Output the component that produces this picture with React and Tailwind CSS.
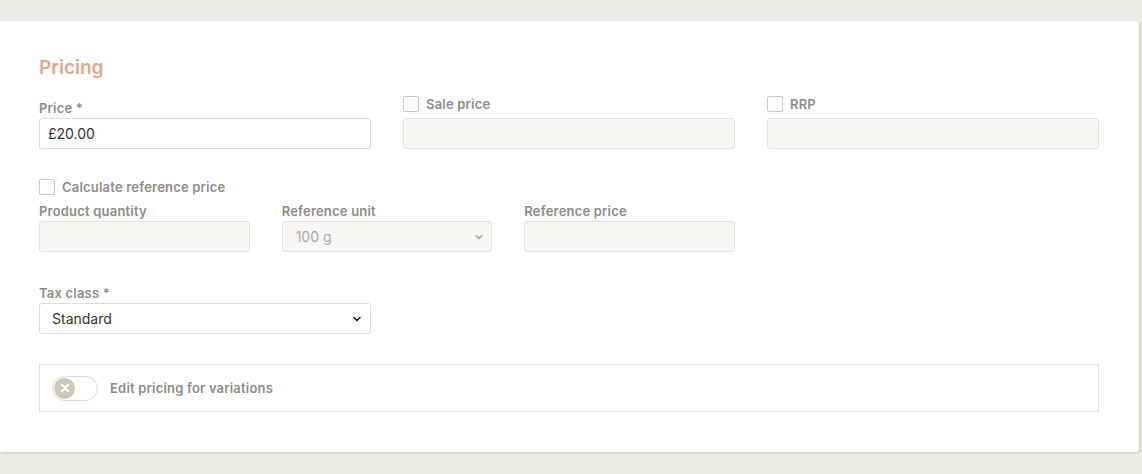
import React from "react";

const font = { fontFamily: '"Inter", "Liberation Sans", sans-serif' };

function Label({ children }) {
  return <div className="text-[13px] font-semibold text-[#8d8d8a] leading-[16px] tracking-[0.2px]">{children}</div>;
}

function Check() {
  return <span className="inline-block w-[16px] h-[16px] border border-[#c9c7c0] rounded-[2px] bg-white shrink-0" />;
}

function Disabled({ children, select }) {
  return (
    <div className="h-[31px] rounded-[3px] border border-[#e3e1db] bg-[#f7f6f2] flex items-center justify-between pl-[13px] pr-[6px] text-[14px] text-[#a9a8a4]">
      <span>{children}</span>
      {select && (
        <svg width="12" height="12" viewBox="0 0 12 12" className="text-[#a5a4a0]">
          <path d="M3 4.5l3 3 3-3" fill="none" stroke="currentColor" strokeWidth="1.5" strokeLinecap="round" strokeLinejoin="round" />
        </svg>
      )}
    </div>
  );
}

export default function App() {
  return (
    <div className="w-[1142px] h-[474px] bg-[#ecebe6] pt-[21px] overflow-hidden" style={font}>
      <div className="w-[1139px] h-[431px] bg-white rounded-tr-[4px] rounded-br-[4px] shadow-[1px_1px_3px_rgba(0,0,0,0.18)] pl-[39px] pr-[40px] pt-[36px]">
        <h2 className="text-[19px] font-semibold text-[#e2a78c] leading-[22px]">Pricing</h2>

        <div className="grid grid-cols-3 gap-x-[32px] mt-[17px] w-[1060px]">
          <div>
            <div className="h-[22px] flex items-end pb-[2px]"><Label>Price *</Label></div>
            <div className="h-[31px] rounded-[3px] border border-[#dedcd6] bg-white flex items-center pl-[8px] text-[14px] text-[#333]">£20.00</div>
          </div>
          <div>
            <div className="h-[22px] flex items-start gap-[7px]"><Check /><Label>Sale price</Label></div>
            <Disabled />
          </div>
          <div>
            <div className="h-[22px] flex items-start gap-[7px]"><Check /><Label>RRP</Label></div>
            <Disabled />
          </div>
        </div>

        <div className="mt-[30px] flex items-center gap-[7px] h-[16px]"><Check /><Label>Calculate reference price</Label></div>

        <div className="grid grid-cols-3 gap-x-[32px] mt-[8px] w-[696px]">
          <div>
            <div className="h-[17px]"><Label>Product quantity</Label></div>
            <div className="mt-[1px]"><Disabled /></div>
          </div>
          <div>
            <div className="h-[17px]"><Label>Reference unit</Label></div>
            <div className="mt-[1px]"><Disabled select>100 g</Disabled></div>
          </div>
          <div>
            <div className="h-[17px]"><Label>Reference price</Label></div>
            <div className="mt-[1px]"><Disabled /></div>
          </div>
        </div>

        <div className="mt-[33px] w-[332px]">
          <div className="h-[17px]"><Label>Tax class *</Label></div>
          <div className="mt-[1px] h-[31px] rounded-[3px] border border-[#dedcd6] bg-white flex items-center justify-between pl-[12px] pr-[7px] text-[14px] text-[#333]">
            <span>Standard</span>
            <svg width="12" height="12" viewBox="0 0 12 12" className="text-[#222]">
              <path d="M3 4.5l3 3 3-3" fill="none" stroke="currentColor" strokeWidth="1.6" strokeLinecap="round" strokeLinejoin="round" />
            </svg>
          </div>
        </div>

        <div className="mt-[30px] w-[1060px] h-[48px] border border-[#e3e1dc] flex items-center pl-[12px] gap-[12px]">
          <div className="w-[46px] h-[25px] rounded-full border border-[#dcdad2] bg-white flex items-center pl-[1px]">
            <div className="w-[21px] h-[21px] rounded-full bg-[#cbc8b8] flex items-center justify-center">
              <svg width="12" height="12" viewBox="0 0 12 12">
                <path d="M3 3l6 6M9 3l-6 6" stroke="white" strokeWidth="2.4" strokeLinecap="round" />
              </svg>
            </div>
          </div>
          <Label>Edit pricing for variations</Label>
        </div>
      </div>
    </div>
  );
}
